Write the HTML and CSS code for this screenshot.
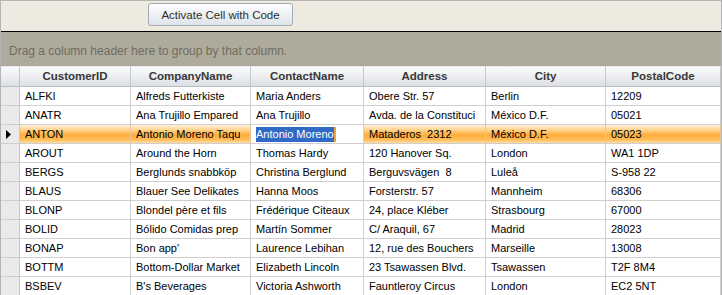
FILE: index.html
```html
<!DOCTYPE html>
<html>

<head>
    <link rel="stylesheet" href="styles.css">
</head>

<body>
    <div class="window">
        <div class="toolbar">
            <button class="btn">Activate Cell with Code</button>
        </div>
        <div class="group_panel">
            <p class="group_text">Drag a column header here to group by that column.</p>
        </div>
        <div class="grid">
            <div class="hd row_hd"></div>
            <div class="hd">CustomerID</div>
            <div class="hd">CompanyName</div>
            <div class="hd">ContactName</div>
            <div class="hd">Address</div>
            <div class="hd">City</div>
            <div class="hd">PostalCode</div>

            <div class="row_hd"></div>
            <div class="cell">ALFKI</div>
            <div class="cell">Alfreds Futterkiste</div>
            <div class="cell">Maria Anders</div>
            <div class="cell">Obere Str. 57</div>
            <div class="cell">Berlin</div>
            <div class="cell">12209</div>

            <div class="row_hd"></div>
            <div class="cell">ANATR</div>
            <div class="cell">Ana Trujillo Empared</div>
            <div class="cell">Ana Trujillo</div>
            <div class="cell">Avda. de la Constituci</div>
            <div class="cell">México D.F.</div>
            <div class="cell">05021</div>

            <div class="row_hd current">
                <svg width="5" height="9" viewBox="0 0 5 9"><polygon points="0,0 5,4.5 0,9" fill="#000"/></svg>
            </div>
            <div class="cell sel">ANTON</div>
            <div class="cell sel">Antonio Moreno Taqu</div>
            <div class="cell editor"><span class="picked">Antonio Moreno</span><span class="caret"></span></div>
            <div class="cell sel">Mataderos&nbsp; 2312</div>
            <div class="cell sel">México D.F.</div>
            <div class="cell sel">05023</div>

            <div class="row_hd"></div>
            <div class="cell">AROUT</div>
            <div class="cell">Around the Horn</div>
            <div class="cell">Thomas Hardy</div>
            <div class="cell">120 Hanover Sq.</div>
            <div class="cell">London</div>
            <div class="cell">WA1 1DP</div>

            <div class="row_hd"></div>
            <div class="cell">BERGS</div>
            <div class="cell">Berglunds snabbköp</div>
            <div class="cell">Christina Berglund</div>
            <div class="cell">Berguvsvägen&nbsp; 8</div>
            <div class="cell">Luleå</div>
            <div class="cell">S-958 22</div>

            <div class="row_hd"></div>
            <div class="cell">BLAUS</div>
            <div class="cell">Blauer See Delikates</div>
            <div class="cell">Hanna Moos</div>
            <div class="cell">Forsterstr. 57</div>
            <div class="cell">Mannheim</div>
            <div class="cell">68306</div>

            <div class="row_hd"></div>
            <div class="cell">BLONP</div>
            <div class="cell">Blondel père et fils</div>
            <div class="cell">Frédérique Citeaux</div>
            <div class="cell">24, place Kléber</div>
            <div class="cell">Strasbourg</div>
            <div class="cell">67000</div>

            <div class="row_hd"></div>
            <div class="cell">BOLID</div>
            <div class="cell">Bólido Comidas prep</div>
            <div class="cell">Martín Sommer</div>
            <div class="cell">C/ Araquil, 67</div>
            <div class="cell">Madrid</div>
            <div class="cell">28023</div>

            <div class="row_hd"></div>
            <div class="cell">BONAP</div>
            <div class="cell">Bon app'</div>
            <div class="cell">Laurence Lebihan</div>
            <div class="cell">12, rue des Bouchers</div>
            <div class="cell">Marseille</div>
            <div class="cell">13008</div>

            <div class="row_hd"></div>
            <div class="cell">BOTTM</div>
            <div class="cell">Bottom-Dollar Market</div>
            <div class="cell">Elizabeth Lincoln</div>
            <div class="cell">23 Tsawassen Blvd.</div>
            <div class="cell">Tsawassen</div>
            <div class="cell">T2F 8M4</div>

            <div class="row_hd"></div>
            <div class="cell">BSBEV</div>
            <div class="cell">B's Beverages</div>
            <div class="cell">Victoria Ashworth</div>
            <div class="cell">Fauntleroy Circus</div>
            <div class="cell">London</div>
            <div class="cell">EC2 5NT</div>
        </div>
    </div>
</body>

</html>
```

FILE: styles.css
```css
body {
    margin: 0;
    font-family: "Liberation Sans", Arial, sans-serif;
    background-color: white;
}

.window {
    width: 722px;
    height: 295px;
    box-sizing: border-box;
    border: 1px solid #b4b4b4;
    border-bottom: none;
    overflow: hidden;
    background-color: white;
}

.toolbar {
    background-color: #eeeae0;
    border-bottom: 1px solid black;
    display: flex;
    align-items: flex-start;
    padding: 2px 0 0 147px;
    box-sizing: border-box;
    height: 31px;
}

.btn {
    width: 145px;
    height: 23px;
    border: 1px solid #a3abb4;
    border-radius: 3px;
    background: linear-gradient(#fdfdfd, #eef1f4 50%, #dfe4ea);
    font-family: "Liberation Sans", Arial, sans-serif;
    font-size: 11.5px;
    color: #2e2e2e;
    padding: 0;
}

.group_panel {
    height: 34px;
    background-color: #aeab9c;
    display: flex;
    align-items: center;
}

.group_text {
    margin: 3px 0 0 8px;
    font-size: 12px;
    color: #6f6b60;
}

.grid {
    display: grid;
    grid-template-columns: 19px 111px 120px 113px 122px 120px 115px;
    grid-auto-rows: 19px;
    grid-template-rows: 21px;
}

.grid > div {
    box-sizing: border-box;
    border-right: 1px solid #cfcfcf;
    border-bottom: 1px solid #cfcfcf;
    font-size: 11px;
    white-space: nowrap;
    overflow: hidden;
}

.grid > .hd {
    background: linear-gradient(#fafbfc, #eceef1 50%, #dcdfe4);
    border-right-color: #c4c8ce;
    border-bottom-color: #b9bdc3;
    border-top: 1px solid #e8eaed;
    font-weight: bold;
    font-size: 11.5px;
    color: #383838;
    text-align: center;
    line-height: 19px;
}

.grid > .row_hd {
    background-color: #ece9ec;
    border-right-color: #c6c4c6;
}

.grid > .hd.row_hd {
    background: linear-gradient(#fafbfc, #eceef1 50%, #dcdfe4);
}

.current {
    display: flex;
    align-items: center;
    padding-left: 5px;
}

.cell {
    padding: 0 5px;
    line-height: 18px;
    color: black;
}

.grid > .sel {
    background: linear-gradient(#fff2da, #ffcf85 30%, #ffae3e 55%, #ffb951 78%, #ffdca0);
    border-right-color: #e6c49a;
}

.editor {
    display: flex;
    align-items: center;
}

.picked {
    background-color: #3169c6;
    color: white;
    line-height: 15px;
}

.caret {
    width: 2px;
    height: 15px;
    background-color: #f0a040;
}
```
